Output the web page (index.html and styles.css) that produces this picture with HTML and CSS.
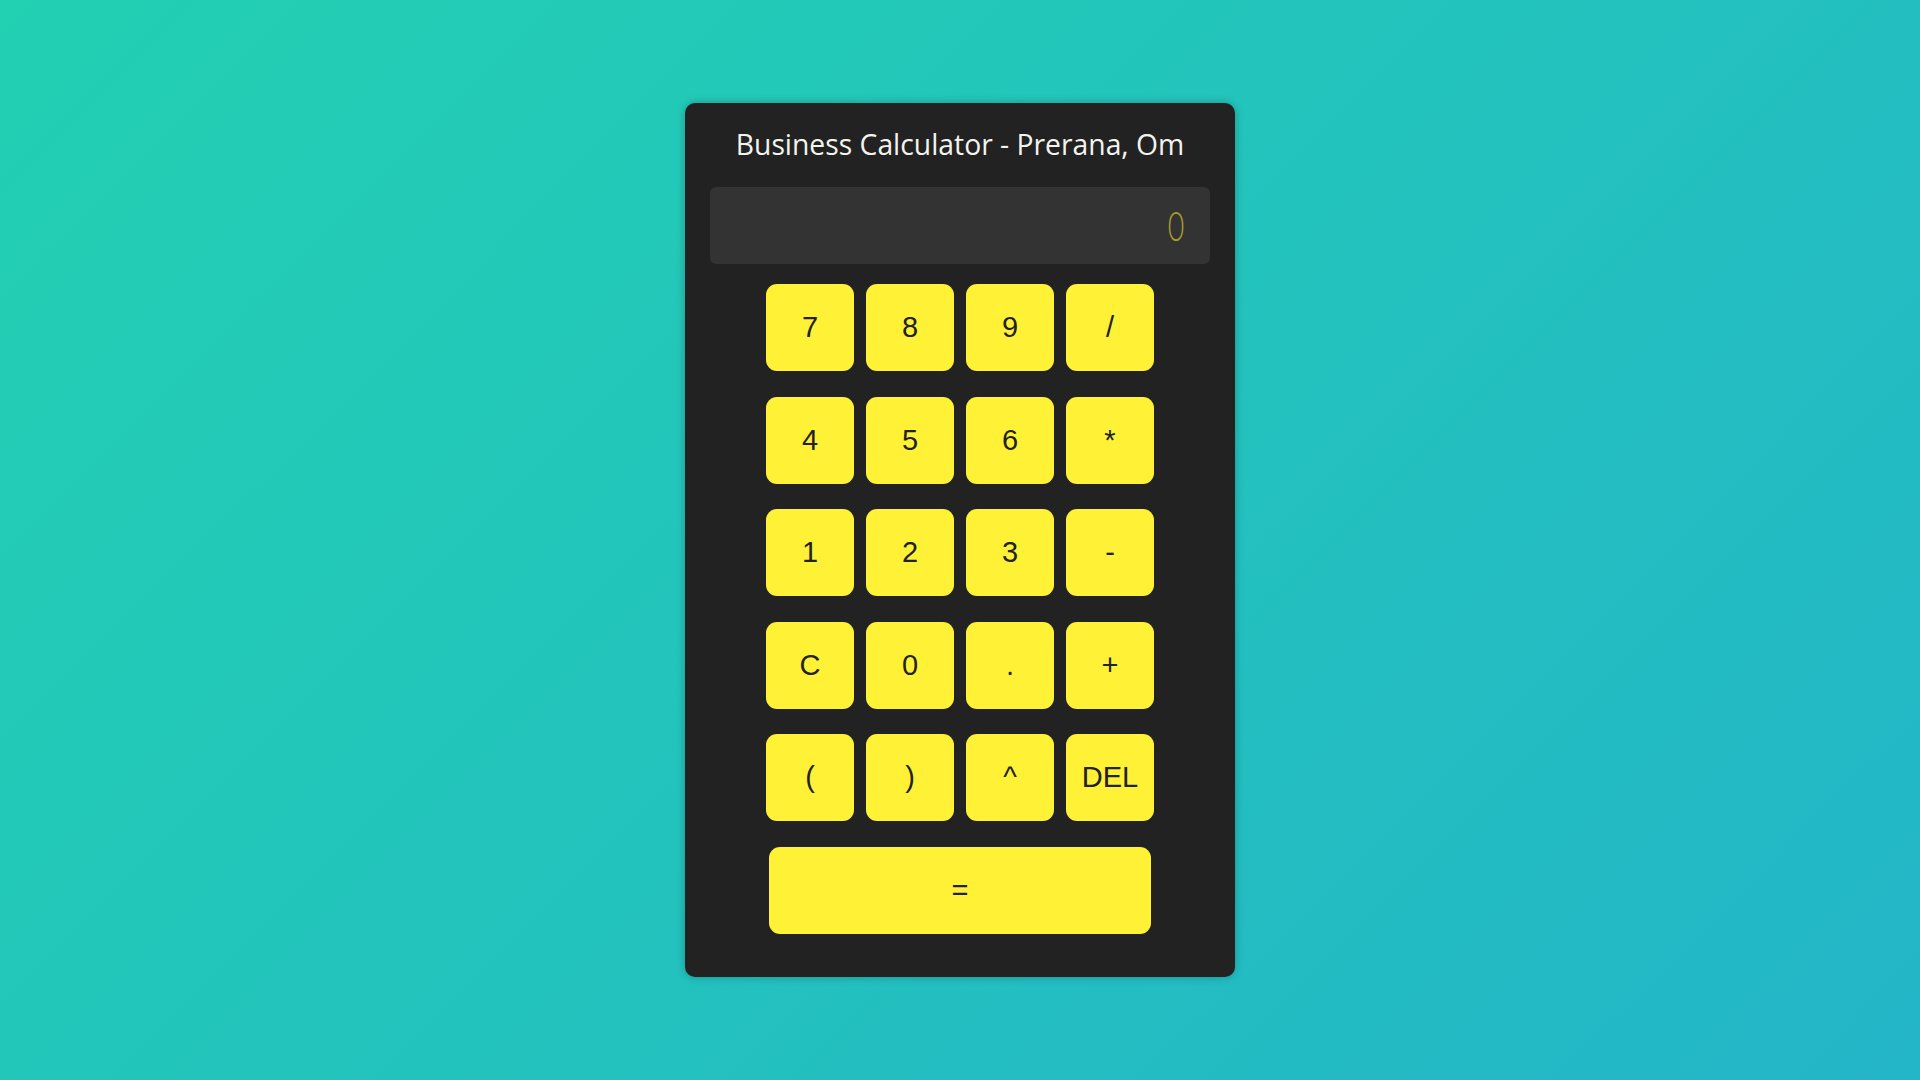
FILE: index.html
```html
<!DOCTYPE html>
<html lang="en">
<head>
<meta charset="utf-8">
<title>Business Calculator</title>
<link rel="stylesheet" href="styles.css">
</head>
<body>
<main class="calculator">
  <h1 class="title">Business Calculator - Prerana, Om</h1>
  <div class="display"><span class="display-value">0</span></div>
  <div class="keys">
    <button class="key">7</button>
    <button class="key">8</button>
    <button class="key">9</button>
    <button class="key">/</button>
    <button class="key">4</button>
    <button class="key">5</button>
    <button class="key">6</button>
    <button class="key">*</button>
    <button class="key">1</button>
    <button class="key">2</button>
    <button class="key">3</button>
    <button class="key">-</button>
    <button class="key">C</button>
    <button class="key">0</button>
    <button class="key">.</button>
    <button class="key">+</button>
    <button class="key">(</button>
    <button class="key">)</button>
    <button class="key">^</button>
    <button class="key">DEL</button>
    <button class="key key-equals">=</button>
  </div>
</main>
</body>
</html>
```
FILE: styles.css
```css
html, body {
  margin: 0;
  height: 100%;
}

body {
  display: flex;
  align-items: center;
  justify-content: center;
  background: linear-gradient(135deg, #22d0b2 0%, #23c3bd 50%, #23b5c8 100%);
  font-family: "Liberation Sans", Arial, sans-serif;
}

.calculator {
  width: 500px;
  padding: 25px 25px 43px;
  background: #222222;
  border-radius: 10px;
  box-shadow: 0 0 8px rgba(0, 0, 0, 0.25);
  display: flex;
  flex-direction: column;
  align-items: center;
}

.title {
  margin: 0 0 26px;
  height: 33px;
  line-height: 33px;
  font-family: "Open Sans", "Noto Sans", sans-serif;
  font-weight: 400;
  font-size: 28.3px;
  color: #f4f4ee;
  text-align: center;
  white-space: nowrap;
}

.display {
  width: 100%;
  height: 77px;
  box-sizing: border-box;
  background: #333333;
  border-radius: 6px;
  display: flex;
  align-items: center;
  justify-content: flex-end;
  padding: 0 26px 2px 0;
  margin-bottom: 20px;
}

.display-value {
  font-family: "Lato", "Liberation Sans Narrow", sans-serif;
  font-weight: 300;
  font-size: 42px;
  color: #a89c2c;
  display: inline-block;
  transform: scaleX(0.68);
  transform-origin: right center;
}

.keys {
  display: grid;
  grid-template-columns: repeat(4, 88px);
  grid-auto-rows: 87px;
  column-gap: 12px;
  row-gap: 25.5px;
}

.key {
  border: none;
  margin: 0;
  padding: 0;
  background: #fff236;
  color: #222222;
  border-radius: 11px;
  font-family: "Liberation Sans", Arial, sans-serif;
  font-size: 29px;
  cursor: pointer;
}

.key-equals {
  grid-column: 1 / -1;
  margin: 0 3px;
}
```
